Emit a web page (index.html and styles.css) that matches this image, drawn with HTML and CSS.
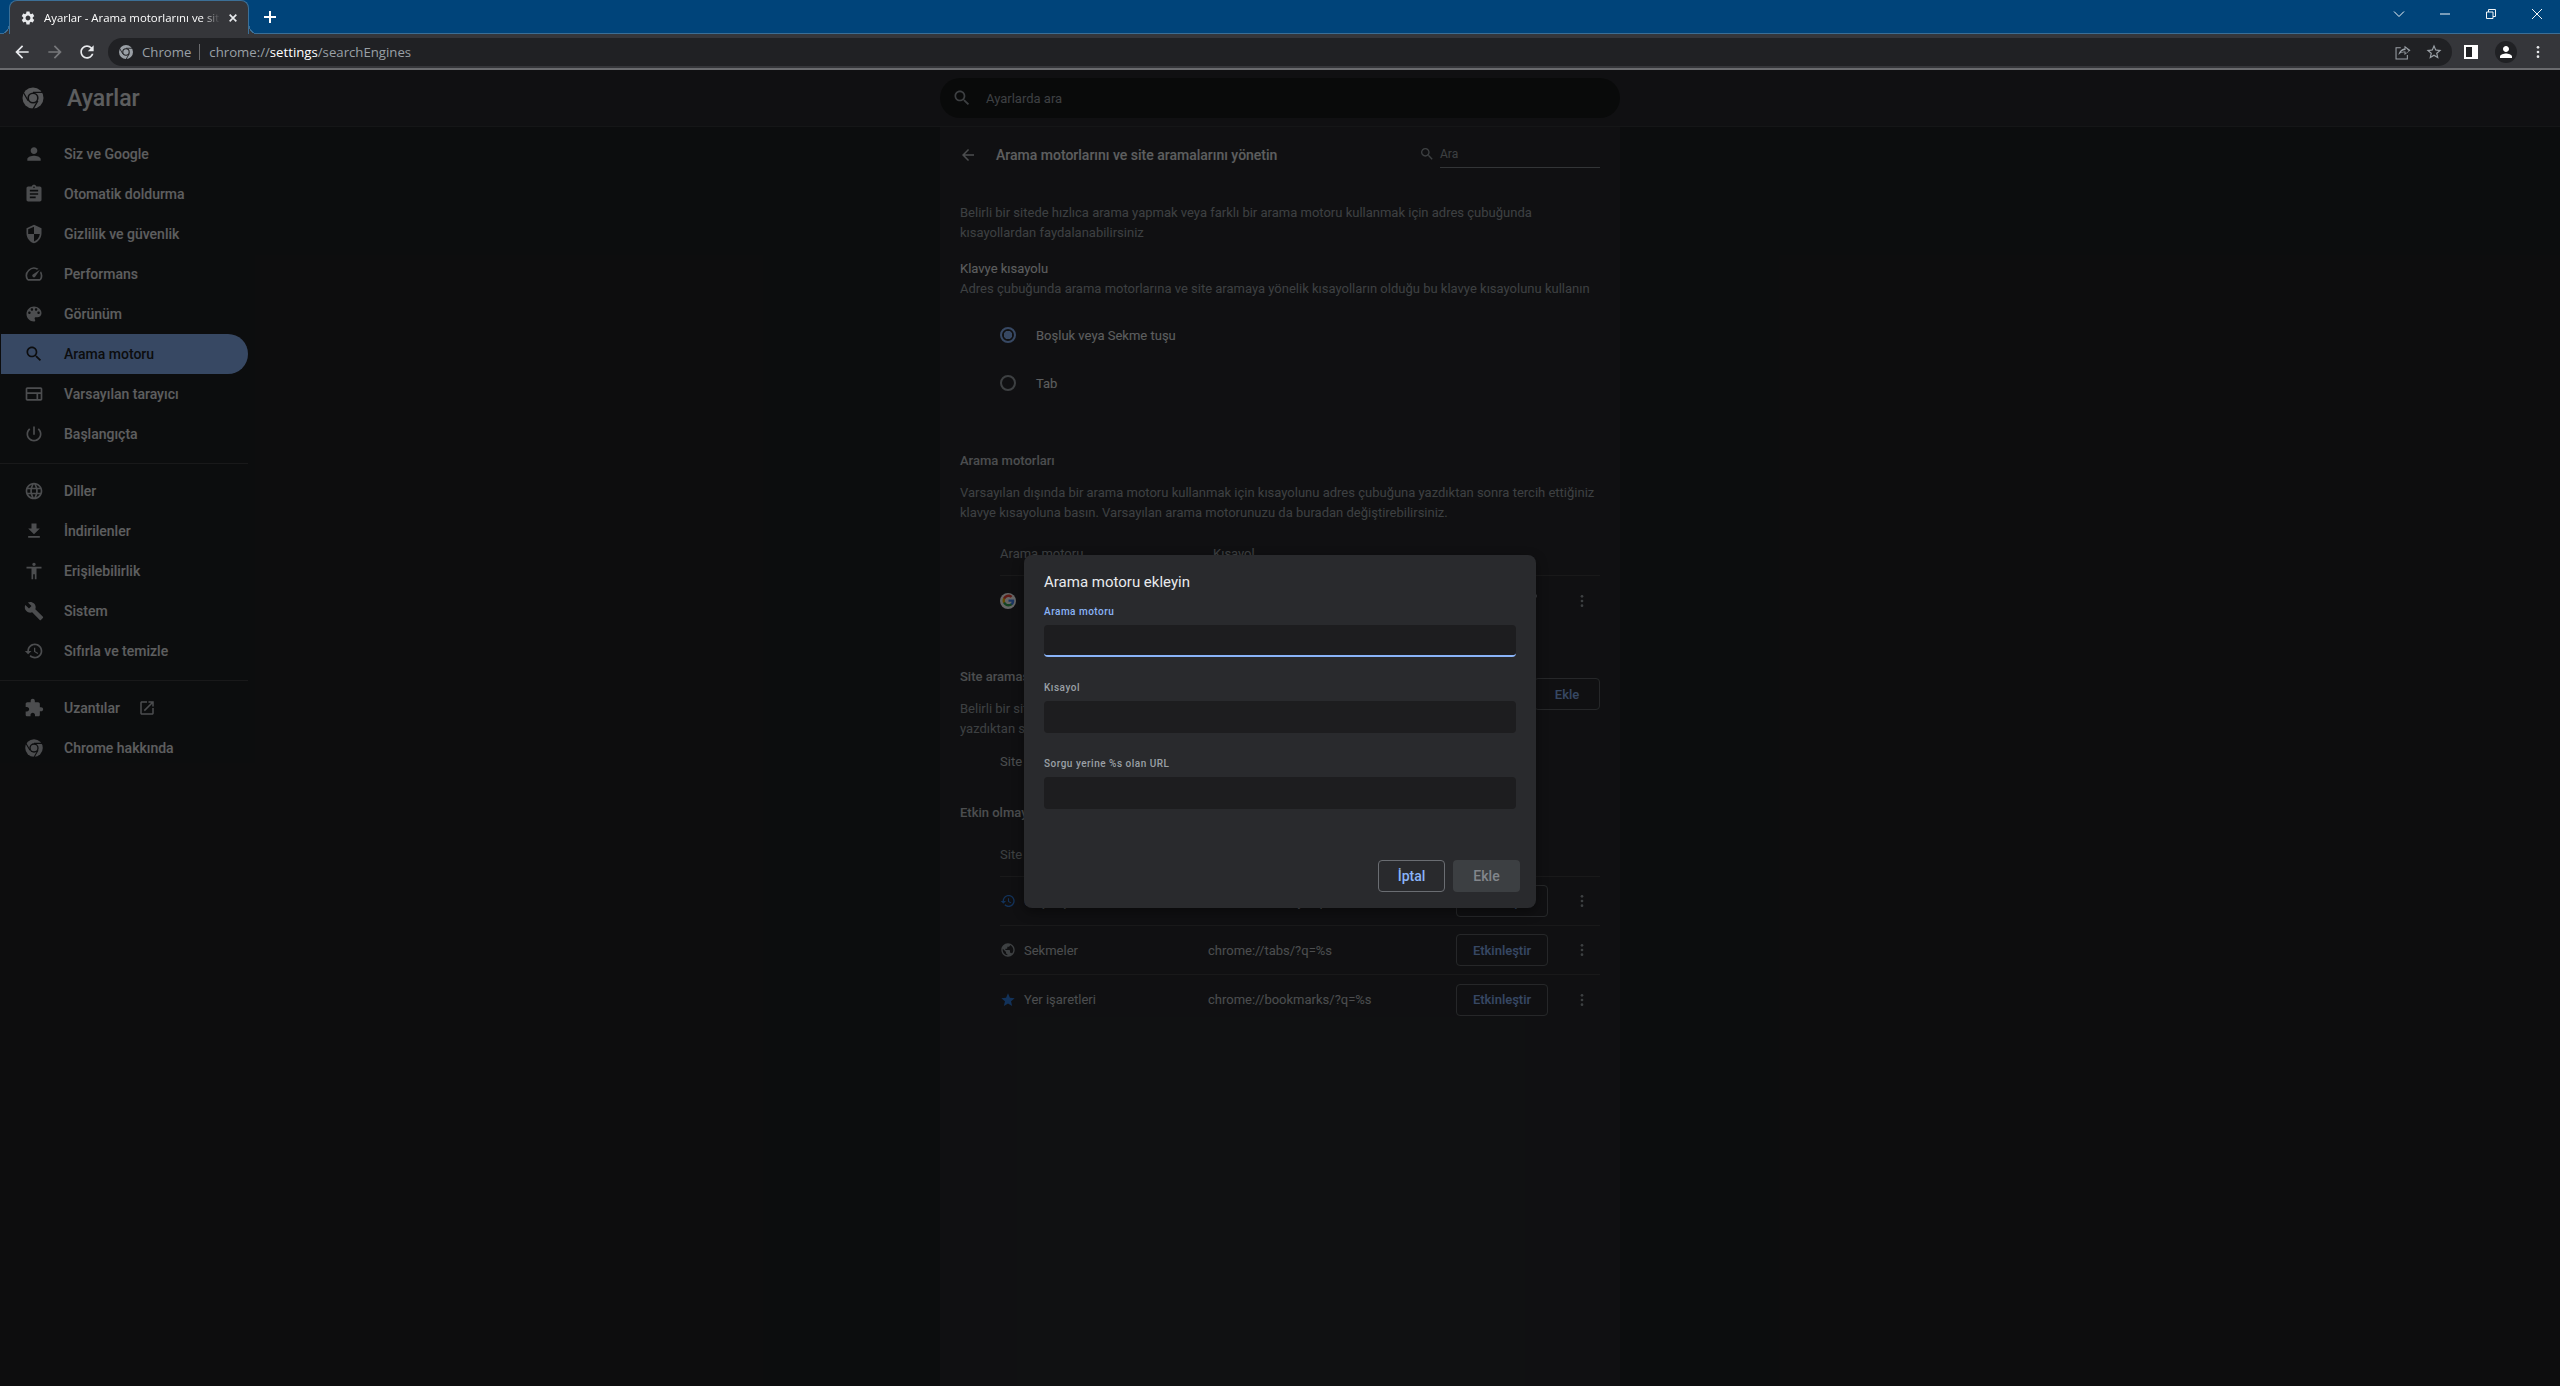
FILE: index.html
```html
<!DOCTYPE html>
<html lang="tr">
<head>
    <meta charset="UTF-8">
    <meta name="viewport" content="width=device-width, initial-scale=1.0">
    <title>Ayarlar - Arama motorlarını ve site aramalarını yönetin</title>
    <link rel="stylesheet" href="styles.css">
</head>
<body>
    <svg class="sprite" xmlns="http://www.w3.org/2000/svg">
        <symbol id="i-person" viewBox="0 0 24 24"><path d="M12 12c2.21 0 4-1.79 4-4s-1.79-4-4-4-4 1.79-4 4 1.79 4 4 4zm0 2c-2.67 0-8 1.34-8 4v2h16v-2c0-2.66-5.33-4-8-4z"/></symbol>
        <symbol id="i-assignment" viewBox="0 0 24 24"><path d="M19 3h-4.18C14.4 1.84 13.3 1 12 1c-1.3 0-2.4.84-2.82 2H5c-1.1 0-2 .9-2 2v14c0 1.1.9 2 2 2h14c1.1 0 2-.9 2-2V5c0-1.1-.9-2-2-2zm-7 0c.55 0 1 .45 1 1s-.45 1-1 1-1-.45-1-1 .45-1 1-1zm2 14H7v-2h7v2zm3-4H7v-2h10v2zm0-4H7V7h10v2z"/></symbol>
        <symbol id="i-security" viewBox="0 0 24 24"><path d="M12 1L3 5v6c0 5.55 3.84 10.74 9 12 5.16-1.26 9-6.45 9-12V5l-9-4zm0 10.99h7c-.53 4.12-3.28 7.79-7 8.94V12H5V6.3l7-3.11v8.8z"/></symbol>
        <symbol id="i-speed" viewBox="0 0 24 24"><path d="M20.38 8.57l-1.23 1.85a8 8 0 0 1-.22 7.58H5.07A8 8 0 0 1 15.58 6.85l1.85-1.23A10 10 0 0 0 3.35 19a2 2 0 0 0 1.72 1h13.85a2 2 0 0 0 1.74-1 10 10 0 0 0-.27-10.44zm-9.79 6.84a2 2 0 0 0 2.83 0l5.66-8.49-8.49 5.66a2 2 0 0 0 0 2.83z"/></symbol>
        <symbol id="i-palette" viewBox="0 0 24 24"><path d="M12 3c-4.97 0-9 4.03-9 9s4.03 9 9 9c.83 0 1.5-.67 1.5-1.5 0-.39-.15-.74-.39-1.01-.23-.26-.38-.61-.38-.99 0-.83.67-1.5 1.5-1.5H16c2.76 0 5-2.24 5-5 0-4.42-4.03-8-9-8zm-5.5 9c-.83 0-1.5-.67-1.5-1.5S5.67 9 6.5 9 8 9.67 8 10.5 7.33 12 6.5 12zm3-4C8.67 8 8 7.33 8 6.5S8.67 5 9.5 5s1.5.67 1.5 1.5S10.33 8 9.5 8zm5 0c-.83 0-1.5-.67-1.5-1.5S13.67 5 14.5 5s1.5.67 1.5 1.5S15.33 8 14.5 8zm3 4c-.83 0-1.5-.67-1.5-1.5S16.67 9 17.5 9s1.5.67 1.5 1.5-.67 1.5-1.5 1.5z"/></symbol>
        <symbol id="i-search" viewBox="0 0 24 24"><path d="M15.5 14h-.79l-.28-.27C15.41 12.59 16 11.11 16 9.5 16 5.91 13.09 3 9.5 3S3 5.91 3 9.5 5.91 16 9.5 16c1.61 0 3.09-.59 4.23-1.57l.27.28v.79l5 4.99L20.49 19l-4.99-5zm-6 0C7.01 14 5 11.99 5 9.5S7.01 5 9.5 5 14 7.01 14 9.5 11.99 14 9.5 14z"/></symbol>
        <symbol id="i-browser" viewBox="0 0 24 24"><path d="M20 4H4c-1.1 0-2 .9-2 2v12c0 1.1.9 2 2 2h16c1.1 0 2-.9 2-2V6c0-1.1-.9-2-2-2zm0 14H4v-6h11v6h2v-6h3v6zm0-8H4V6h16v4z"/></symbol>
        <symbol id="i-power" viewBox="0 0 24 24"><path d="M13 3h-2v10h2V3zm4.83 2.17l-1.42 1.42C17.99 7.86 19 9.81 19 12c0 3.87-3.13 7-7 7s-7-3.13-7-7c0-2.19 1.01-4.14 2.58-5.42L6.17 5.17C4.23 6.82 3 9.26 3 12c0 4.97 4.03 9 9 9s9-4.03 9-9c0-2.74-1.23-5.18-3.17-6.83z"/></symbol>
        <symbol id="i-language" viewBox="0 0 24 24"><path d="M11.99 2C6.47 2 2 6.48 2 12s4.47 10 9.99 10C17.52 22 22 17.52 22 12S17.52 2 11.99 2zm6.93 6h-2.95c-.32-1.25-.78-2.45-1.38-3.56 1.84.63 3.37 1.91 4.33 3.56zM12 4.04c.83 1.2 1.48 2.53 1.91 3.96h-3.82c.43-1.43 1.08-2.76 1.91-3.96zM4.26 14C4.1 13.36 4 12.69 4 12s.1-1.36.26-2h3.38c-.08.66-.14 1.32-.14 2 0 .68.06 1.34.14 2H4.26zm.82 2h2.95c.32 1.25.78 2.45 1.38 3.56-1.84-.63-3.37-1.9-4.33-3.56zm2.95-8H5.08c.96-1.66 2.49-2.93 4.33-3.56C8.81 5.55 8.35 6.75 8.03 8zM12 19.96c-.83-1.2-1.48-2.53-1.91-3.96h3.82c-.43 1.43-1.08 2.76-1.91 3.96zM14.34 14H9.66c-.09-.66-.16-1.32-.16-2 0-.68.07-1.35.16-2h4.68c.09.65.16 1.32.16 2 0 .68-.07 1.34-.16 2zm.25 5.56c.6-1.11 1.06-2.31 1.38-3.56h2.95c-.96 1.65-2.49 2.93-4.33 3.56zM16.36 14c.08-.66.14-1.32.14-2 0-.68-.06-1.34-.14-2h3.38c.16.64.26 1.31.26 2s-.1 1.36-.26 2h-3.38z"/></symbol>
        <symbol id="i-download" viewBox="0 0 24 24"><path d="M19 9h-4V3H9v6H5l7 7 7-7zM5 18v2h14v-2H5z"/></symbol>
        <symbol id="i-accessibility" viewBox="0 0 24 24"><path d="M12 2c1.1 0 2 .9 2 2s-.9 2-2 2-2-.9-2-2 .9-2 2-2zm9 7h-6v13h-2v-6h-2v6H9V9H3V7h18v2z"/></symbol>
        <symbol id="i-build" viewBox="0 0 24 24"><path d="M22.7 19l-9.1-9.1c.9-2.3.4-5-1.5-6.9-2-2-5-2.4-7.4-1.3L9 6 6 9 1.6 4.7C.4 7.1.9 10.1 2.9 12.1c1.9 1.9 4.6 2.4 6.9 1.5l9.1 9.1c.4.4 1 .4 1.4 0l2.3-2.3c.5-.4.5-1.1.1-1.4z"/></symbol>
        <symbol id="i-history" viewBox="0 0 24 24"><path d="M13 3c-4.97 0-9 4.03-9 9H1l3.89 3.89.07.14L9 12H6c0-3.87 3.13-7 7-7s7 3.13 7 7-3.13 7-7 7c-1.93 0-3.68-.79-4.94-2.06l-1.42 1.42C8.27 19.99 10.51 21 13 21c4.97 0 9-4.03 9-9s-4.03-9-9-9zm-1 5v5l4.28 2.54.72-1.21-3.5-2.08V8H12z"/></symbol>
        <symbol id="i-extension" viewBox="0 0 24 24"><path d="M20.5 11H19V7c0-1.1-.9-2-2-2h-4V3.5C13 2.12 11.88 1 10.5 1S8 2.12 8 3.5V5H4c-1.1 0-1.99.9-1.99 2v3.8H3.5c1.49 0 2.7 1.21 2.7 2.7s-1.21 2.7-2.7 2.7H2V20c0 1.1.9 2 2 2h3.8v-1.5c0-1.49 1.21-2.7 2.7-2.7 1.49 0 2.7 1.21 2.7 2.7V22H17c1.1 0 2-.9 2-2v-4h1.5c1.38 0 2.5-1.12 2.5-2.5S21.88 11 20.5 11z"/></symbol>
        <symbol id="i-open" viewBox="0 0 24 24"><path d="M19 19H5V5h7V3H5c-1.11 0-2 .9-2 2v14c0 1.1.89 2 2 2h14c1.1 0 2-.9 2-2v-7h-2v7zM14 3v2h3.59l-9.83 9.83 1.41 1.41L19 6.41V10h2V3h-7z"/></symbol>
        <symbol id="i-back" viewBox="0 0 24 24"><path d="M20 11H7.83l5.59-5.59L12 4l-8 8 8 8 1.41-1.41L7.83 13H20v-2z"/></symbol>
        <symbol id="i-forward" viewBox="0 0 24 24"><path d="M4 11h12.17l-5.59-5.59L12 4l8 8-8 8-1.41-1.41L16.17 13H4v-2z"/></symbol>
        <symbol id="i-refresh" viewBox="0 0 24 24"><path d="M17.65 6.35C16.2 4.9 14.21 4 12 4c-4.42 0-7.99 3.58-7.99 8s3.57 8 7.99 8c3.73 0 6.84-2.55 7.73-6h-2.08c-.82 2.33-3.04 4-5.65 4-3.31 0-6-2.69-6-6s2.69-6 6-6c1.66 0 3.14.69 4.22 1.78L13 11h7V4l-2.35 2.35z"/></symbol>
        <symbol id="i-dots" viewBox="0 0 24 24"><circle cx="12" cy="5" r="2"/><circle cx="12" cy="12" r="2"/><circle cx="12" cy="19" r="2"/></symbol>
        <symbol id="i-star" viewBox="0 0 24 24"><path d="M12 17.27L18.18 21l-1.64-7.03L22 9.24l-7.19-.61L12 2 9.19 8.63 2 9.24l5.46 4.73L5.82 21z"/></symbol>
        <symbol id="i-star-line" viewBox="0 0 24 24"><path d="M22 9.24l-7.19-.62L12 2 9.19 8.63 2 9.24l5.46 4.73L5.82 21 12 17.27 18.18 21l-1.63-7.03L22 9.24zM12 15.4l-3.76 2.27 1-4.28-3.32-2.88 4.38-.38L12 6.1l1.71 4.04 4.38.38-3.32 2.88 1 4.28L12 15.4z"/></symbol>
        <symbol id="i-public" viewBox="0 0 24 24"><path d="M12 2C6.48 2 2 6.48 2 12s4.48 10 10 10 10-4.48 10-10S17.52 2 12 2zm-1 17.93c-3.95-.49-7-3.85-7-7.93 0-.62.08-1.21.21-1.79L9 15v1c0 1.1.9 2 2 2v1.93zm6.9-2.54c-.26-.81-1-1.39-1.9-1.39h-1v-3c0-.55-.45-1-1-1H8v-2h2c.55 0 1-.45 1-1V7h2c1.1 0 2-.9 2-2v-.41c2.93 1.19 5 4.06 5 7.41 0 2.08-.8 3.97-2.1 5.39z"/></symbol>
        <symbol id="i-gear" viewBox="0 0 24 24"><path d="M19.14 12.94c.04-.3.06-.61.06-.94 0-.32-.02-.64-.07-.94l2.03-1.58c.18-.14.23-.41.12-.61l-1.92-3.32c-.12-.22-.37-.29-.59-.22l-2.39.96c-.5-.38-1.03-.7-1.62-.94l-.36-2.54c-.04-.24-.24-.41-.48-.41h-3.84c-.24 0-.43.17-.47.41l-.36 2.54c-.59.24-1.13.57-1.62.94l-2.39-.96c-.22-.08-.47 0-.59.22L2.74 8.87c-.12.21-.08.47.12.61l2.03 1.58c-.05.3-.09.63-.09.94s.02.64.07.94l-2.03 1.58c-.18.14-.23.41-.12.61l1.92 3.32c.12.22.37.29.59.22l2.39-.96c.5.38 1.03.7 1.62.94l.36 2.54c.05.24.24.41.48.41h3.84c.24 0 .44-.17.47-.41l.36-2.54c.59-.24 1.13-.56 1.62-.94l2.39.96c.22.08.47 0 .59-.22l1.92-3.32c.12-.22.07-.47-.12-.61l-2.01-1.58zM12 15.6c-1.98 0-3.6-1.62-3.6-3.6s1.62-3.6 3.6-3.6 3.6 1.62 3.6 3.6-1.62 3.6-3.6 3.6z"/></symbol>
        <symbol id="i-chrome" viewBox="0 0 24 24">
            <circle cx="12" cy="12" r="10.5" fill="currentColor"/>
            <circle cx="12" cy="12" r="5.6" fill="var(--gap)"/>
            <circle cx="12" cy="12" r="4" fill="currentColor"/>
            <path d="M12 6.4h10M7.15 14.8L2.2 6.2M16.85 14.8l-5 8.6" fill="none" stroke="var(--gap)" stroke-width="1.3"/>
        </symbol>
        <symbol id="i-share" viewBox="0 0 24 24"><path d="M2 5.5h7v1.4H3.4v13.7h13.7V16h1.4v6H2z"/><path d="M14 3.5l8 6.2-8 6.2v-3.6c-3.3 0-6 .9-8 3.7.5-4.4 3.3-8 8-8.7zm1.4 2.9v2.9c-3 .2-5 1.3-6.3 3.1 1.7-.9 3.6-1.2 6.3-1.2v2.8l4.3-3.3z" fill-rule="evenodd"/></symbol>
        <symbol id="i-google" viewBox="0 0 24 24">
            <path fill="#4285F4" d="M22.56 12.25c0-.78-.07-1.53-.2-2.25H12v4.26h5.92c-.26 1.37-1.04 2.53-2.08 3.23v2.77h3.57c2.08-1.92 3.28-4.74 3.28-8.01z"/>
            <path fill="#34A853" d="M12 23c2.97 0 5.46-.98 7.28-2.66l-3.57-2.77c-.98.66-2.23 1.06-3.71 1.06-2.86 0-5.29-1.93-6.16-4.53H2.18v2.84C3.99 20.53 7.7 23 12 23z"/>
            <path fill="#FBBC05" d="M5.84 14.09c-.22-.66-.35-1.36-.35-2.09s.13-1.43.35-2.09V7.07H2.18C1.43 8.55 1 10.22 1 12s.43 3.45 1.18 4.93l2.85-2.22.81-.62z"/>
            <path fill="#EA4335" d="M12 5.38c1.62 0 3.06.56 4.21 1.64l3.15-3.15C17.45 2.09 14.97 1 12 1 7.7 1 3.99 3.47 2.18 7.07l3.66 2.84c.87-2.6 3.3-4.53 6.16-4.53z"/>
        </symbol>
    </svg>

    <div class="tabstrip">
        <div class="tab">
            <svg class="tab-icon"><use href="#i-gear"/></svg>
            <span class="tab-title">Ayarlar - Arama motorlarını ve sit</span>
            <svg class="tab-close" viewBox="0 0 12 12"><path d="M2 2l8 8M10 2l-8 8"/></svg>
        </div>
        <svg class="new-tab" viewBox="0 0 12 12"><path d="M6 0v12M0 6h12"/></svg>
        <div class="window-controls">
            <svg class="win-btn" viewBox="0 0 12 12"><path d="M1 3.5l5 5 5-5"/></svg>
            <svg class="win-btn" viewBox="0 0 12 12"><path d="M1 6h10"/></svg>
            <svg class="win-btn" viewBox="0 0 12 12"><path d="M1.5 4H8v6.5H1.5zM3.5 4V1.5h7v7H8"/></svg>
            <svg class="win-btn" viewBox="0 0 12 12"><path d="M1 1l10 10M11 1L1 11"/></svg>
        </div>
    </div>

    <div class="toolbar">
        <svg class="tool-icon"><use href="#i-back"/></svg>
        <svg class="tool-icon tool-off"><use href="#i-forward"/></svg>
        <svg class="tool-icon"><use href="#i-refresh"/></svg>
        <div class="omnibox">
            <svg class="omni-logo"><use href="#i-chrome"/></svg>
            <span class="omni-chip">Chrome</span>
            <span class="omni-url">chrome://<b>settings</b>/searchEngines</span>
            <svg class="omni-action omni-share"><use href="#i-share"/></svg>
            <svg class="omni-action"><use href="#i-star-line"/></svg>
        </div>
        <div class="side-panel-btn"></div>
        <div class="avatar"><svg><use href="#i-person"/></svg></div>
        <svg class="tool-dots"><use href="#i-dots"/></svg>
    </div>

    <div class="page">
        <header class="page-header">
            <div class="brand">
                <svg class="brand-logo"><use href="#i-chrome"/></svg>
                <h1>Ayarlar</h1>
            </div>
            <div class="main-search">
                <svg><use href="#i-search"/></svg>
                <span>Ayarlarda ara</span>
            </div>
        </header>

        <div class="page-body">
            <nav class="sidebar">
                <a class="nav-item"><svg><use href="#i-person"/></svg>Siz ve Google</a>
                <a class="nav-item"><svg><use href="#i-assignment"/></svg>Otomatik doldurma</a>
                <a class="nav-item"><svg><use href="#i-security"/></svg>Gizlilik ve güvenlik</a>
                <a class="nav-item"><svg><use href="#i-speed"/></svg>Performans</a>
                <a class="nav-item"><svg><use href="#i-palette"/></svg>Görünüm</a>
                <a class="nav-item active"><svg><use href="#i-search"/></svg>Arama motoru</a>
                <a class="nav-item"><svg><use href="#i-browser"/></svg>Varsayılan tarayıcı</a>
                <a class="nav-item"><svg><use href="#i-power"/></svg>Başlangıçta</a>
                <div class="nav-sep"></div>
                <a class="nav-item"><svg><use href="#i-language"/></svg>Diller</a>
                <a class="nav-item"><svg><use href="#i-download"/></svg>İndirilenler</a>
                <a class="nav-item"><svg><use href="#i-accessibility"/></svg>Erişilebilirlik</a>
                <a class="nav-item"><svg><use href="#i-build"/></svg>Sistem</a>
                <a class="nav-item"><svg><use href="#i-history"/></svg>Sıfırla ve temizle</a>
                <div class="nav-sep"></div>
                <a class="nav-item"><svg><use href="#i-extension"/></svg>Uzantılar<svg class="nav-open"><use href="#i-open"/></svg></a>
                <a class="nav-item"><svg class="nav-chrome"><use href="#i-chrome"/></svg>Chrome hakkında</a>
            </nav>

            <main class="content">
                <div class="subpage-head">
                    <svg class="subpage-back"><use href="#i-back"/></svg>
                    <h2>Arama motorlarını ve site aramalarını yönetin</h2>
                    <div class="subpage-search">
                        <svg><use href="#i-search"/></svg>
                        <span>Ara</span>
                    </div>
                </div>

                <p class="text intro">Belirli bir sitede hızlıca arama yapmak veya farklı bir arama motoru kullanmak için adres çubuğunda<br>kısayollardan faydalanabilirsiniz</p>

                <div class="keyboard">
                    <div class="strong">Klavye kısayolu</div>
                    <p class="text">Adres çubuğunda arama motorlarına ve site aramaya yönelik kısayolların olduğu bu klavye kısayolunu kullanın</p>
                </div>

                <div class="radios">
                    <div class="radio-row"><span class="radio checked"></span>Boşluk veya Sekme tuşu</div>
                    <div class="radio-row"><span class="radio"></span>Tab</div>
                </div>

                <h3 class="section-title engines-title">Arama motorları</h3>
                <p class="text section-text">Varsayılan dışında bir arama motoru kullanmak için kısayolunu adres çubuğuna yazdıktan sonra tercih ettiğiniz<br>klavye kısayoluna basın. Varsayılan arama motorunuzu da buradan değiştirebilirsiniz.</p>

                <div class="table">
                    <div class="table-head"><span>Arama motoru</span><span>Kısayol</span></div>
                    <div class="table-row">
                        <span class="g-badge"><svg><use href="#i-google"/></svg></span>
                        <span>Google (Varsayılan)</span>
                        <span>google.com</span>
                        <span class="row-mark"></span>
                        <svg class="row-dots"><use href="#i-dots"/></svg>
                    </div>
                </div>

                <div class="site-head">
                    <div>
                        <h3 class="section-title">Site araması</h3>
                        <p class="text section-text">Belirli bir sitede veya Chrome'da arama yapmak için kısayolunu adres çubuğuna<br>yazdıktan sonra tercih ettiğiniz klavye kısayoluna basın.</p>
                    </div>
                    <button class="btn add-btn">Ekle</button>
                </div>
                <div class="empty-row">Site araması eklenmedi</div>

                <h3 class="section-title inactive-title">Etkin olmayan kısayollar</h3>
                <div class="table">
                    <div class="table-head"><span>Site veya sayfa</span><span>Kısayol</span></div>
                    <div class="table-row">
                        <svg class="row-icon blue"><use href="#i-history"/></svg>
                        <span>Geçmiş</span>
                        <span>chrome://history/?q=%s</span>
                        <button class="btn">Etkinleştir</button>
                        <svg class="row-dots"><use href="#i-dots"/></svg>
                    </div>
                    <div class="table-row">
                        <svg class="row-icon"><use href="#i-public"/></svg>
                        <span>Sekmeler</span>
                        <span>chrome://tabs/?q=%s</span>
                        <button class="btn">Etkinleştir</button>
                        <svg class="row-dots"><use href="#i-dots"/></svg>
                    </div>
                    <div class="table-row">
                        <svg class="row-icon blue"><use href="#i-star"/></svg>
                        <span>Yer işaretleri</span>
                        <span>chrome://bookmarks/?q=%s</span>
                        <button class="btn">Etkinleştir</button>
                        <svg class="row-dots"><use href="#i-dots"/></svg>
                    </div>
                </div>
            </main>
        </div>

        <div class="overlay">
            <div class="dialog">
                <h2 class="dialog-title">Arama motoru ekleyin</h2>
                <div class="field focused">
                    <label>Arama motoru</label>
                    <div class="input"></div>
                </div>
                <div class="field">
                    <label>Kısayol</label>
                    <div class="input"></div>
                </div>
                <div class="field">
                    <label>Sorgu yerine %s olan URL</label>
                    <div class="input"></div>
                </div>
                <div class="dialog-buttons">
                    <button class="dialog-btn cancel">İptal</button>
                    <button class="dialog-btn confirm">Ekle</button>
                </div>
            </div>
        </div>
    </div>
</body>
</html>
```

FILE: styles.css
```css
* {
    box-sizing: border-box;
}

html, body {
    height: 100%;
}

body {
    margin: 0;
    display: flex;
    flex-direction: column;
    overflow: hidden;
    font-family: Roboto, "Liberation Sans", sans-serif;
    font-size: 13px;
    background: #202124;
    color: #e8eaed;
}

h1, h2, h3, p {
    margin: 0;
}

.sprite {
    display: none;
}

/* tab strip */
.tabstrip {
    flex: none;
    height: 34px;
    display: flex;
    align-items: flex-start;
    background: #00447a;
    border-bottom: 1px solid #3c6f96;
}

.tab {
    position: relative;
    width: 240px;
    height: 34px;
    margin: 0 0 0 9px;
    padding: 0 10px;
    display: flex;
    align-items: center;
    background: #35363a;
    border: 1px solid #3c6f96;
    border-bottom: none;
    border-radius: 8px 8px 0 0;
    font-family: "Open Sans", sans-serif;
    font-size: 11.4px;
    color: #fff;
}

.tab::before,
.tab::after {
    content: "";
    position: absolute;
    bottom: 0;
    width: 8px;
    height: 8px;
}

.tab::before {
    left: -9px;
    background: radial-gradient(circle at 0 0, transparent 7px, #3c6f96 7px, #3c6f96 8px, #35363a 8px);
}

.tab::after {
    right: -9px;
    background: radial-gradient(circle at 100% 0, transparent 7px, #3c6f96 7px, #3c6f96 8px, #35363a 8px);
}

.tab-icon {
    flex: none;
    width: 16px;
    height: 16px;
    fill: #e8eaed;
    margin-right: 8px;
}

.tab-title {
    flex: 1;
    white-space: nowrap;
    overflow: hidden;
    -webkit-mask-image: linear-gradient(to right, #000 90%, transparent);
    mask-image: linear-gradient(to right, #000 90%, transparent);
}

.tab-close {
    flex: none;
    width: 10px;
    height: 10px;
    margin-left: 8px;
    stroke: #e8eaed;
    stroke-width: 2;
    fill: none;
}

.new-tab {
    flex: none;
    width: 12px;
    height: 12px;
    margin: 11px 0 0 15px;
    stroke: #fff;
    stroke-width: 2;
    fill: none;
}

.window-controls {
    margin-left: auto;
    margin-right: 17px;
    display: flex;
    gap: 34px;
    padding-top: 8px;
}

.win-btn {
    width: 12px;
    height: 12px;
    stroke: #f2f5f7;
    stroke-width: 1;
    fill: none;
}

/* toolbar */
.toolbar {
    flex: none;
    height: 36px;
    display: flex;
    align-items: center;
    padding: 1px 0 0 12px;
    background: #35363a;
    border-bottom: 2px solid #6a6b6e;
}

.tool-icon {
    flex: none;
    width: 20px;
    height: 20px;
    margin-right: 12.5px;
    fill: #e8eaed;
}

.tool-off {
    fill: #77787b;
}

.omnibox {
    flex: none;
    margin-left: -1.5px;
    width: 2344px;
    height: 28px;
    display: flex;
    align-items: center;
    padding-left: 10px;
    background: #202124;
    border-radius: 14px;
    color: #9aa0a6;
    font-family: "Open Sans", sans-serif;
    font-size: 13.2px;
}

.omni-logo {
    --gap: #202124;
    flex: none;
    width: 16px;
    height: 16px;
    color: #9aa0a6;
    margin-right: 8px;
}

.omni-chip {
    padding-right: 8px;
    margin-right: 9px;
    border-right: 1px solid #6a6b6e;
    line-height: 16px;
}

.omni-url b {
    font-weight: 400;
    color: #fff;
}

.omni-action {
    flex: none;
    width: 18px;
    height: 18px;
    fill: #9aa0a6;
    margin-right: 9px;
}

.omni-share {
    margin-left: auto;
    margin-right: 13px;
}

.side-panel-btn {
    flex: none;
    width: 14px;
    height: 14px;
    margin-left: 12px;
    background: #fff;
    border: 2px solid #fff;
    border-right-width: 6px;
    box-shadow: inset 0 0 0 7px #202124;
}

.avatar {
    flex: none;
    width: 22px;
    height: 22px;
    margin-left: 17px;
    display: flex;
    align-items: center;
    justify-content: center;
    background: #202124;
    border-radius: 50%;
}

.avatar svg {
    width: 18px;
    height: 18px;
    fill: #fff;
}

.tool-dots {
    flex: none;
    width: 16px;
    height: 16px;
    margin-left: 13px;
    fill: #e8eaed;
}

/* settings page */
.page {
    position: relative;
    flex: 1;
    min-height: 0;
    display: flex;
    flex-direction: column;
}

.page-header {
    flex: none;
    height: 57px;
    display: grid;
    grid-template-columns: 1fr 680px 1fr;
    align-items: center;
    background: #292a2d;
    border-bottom: 1px solid #36373a;
}

.brand {
    display: flex;
    align-items: center;
    padding-left: 21px;
}

.brand-logo {
    --gap: #292a2d;
    width: 24px;
    height: 24px;
    color: #dadce0;
    margin-right: 22px;
}

.brand h1 {
    font-size: 23px;
    font-weight: 500;
    color: #e8eaed;
}

.main-search {
    height: 40px;
    display: flex;
    align-items: center;
    padding-left: 12px;
    background: #18191b;
    border-radius: 20px;
    color: #9aa0a6;
    font-size: 13px;
}

.main-search svg {
    width: 20px;
    height: 20px;
    fill: #9aa0a6;
    margin-right: 14px;
}

.page-body {
    flex: 1;
    min-height: 0;
    display: grid;
    grid-template-columns: 1fr 680px 1fr;
}

.sidebar {
    padding: 7px 0 0 1px;
    width: 248px;
}

.nav-item {
    height: 40px;
    display: flex;
    align-items: center;
    padding-left: 23px;
    font-size: 14px;
    font-weight: 500;
    color: #e8eaed;
    border-radius: 0 20px 20px 0;
}

.nav-item > svg:first-child {
    flex: none;
    width: 20px;
    height: 20px;
    fill: #bdc1c6;
    margin-right: 20px;
}

.nav-item .nav-chrome {
    --gap: #202124;
    color: #bdc1c6;
}

.nav-item .nav-open {
    width: 18px;
    height: 18px;
    fill: #bdc1c6;
    margin-left: 18px;
}

.nav-item.active {
    background: #8ab4f8;
    color: #202124;
}

.nav-item.active svg {
    fill: #202124;
}

.nav-sep {
    height: 1px;
    margin: 9px 0 7px -1px;
    background: #3f4043;
}

.content {
    grid-column: 2;
    padding: 0 20px;
    background: #292a2d;
}

.subpage-head {
    height: 56px;
    display: flex;
    align-items: center;
}

.subpage-back {
    width: 18px;
    height: 18px;
    margin-left: -1px;
    margin-right: 19px;
    fill: #bdc1c6;
}

.subpage-head h2 {
    font-size: 14px;
    font-weight: 500;
    color: #e8eaed;
}

.subpage-search {
    margin-left: auto;
    margin-top: -6px;
    width: 181px;
    height: 32px;
    display: flex;
    align-items: flex-start;
    color: #9aa0a6;
    font-size: 12px;
}

.subpage-search svg {
    flex: none;
    width: 16px;
    height: 16px;
    fill: #9aa0a6;
    margin: 10px 5px 0 0;
}

.subpage-search span {
    flex: 1;
    height: 32px;
    padding-top: 4px;
    line-height: 28px;
    border-bottom: 1px solid #80868b;
}

.text {
    line-height: 20px;
    color: #9aa0a6;
}

.intro {
    margin-top: 20px;
}

.keyboard {
    margin-top: 16px;
    line-height: 20px;
}

.strong {
    color: #e8eaed;
}

.radios {
    margin-top: 12px;
}

.radio-row {
    height: 48px;
    display: flex;
    align-items: center;
    padding-left: 40px;
    color: #e8eaed;
}

.radio {
    flex: none;
    width: 16px;
    height: 16px;
    margin-right: 20px;
    border: 2px solid #9aa0a6;
    border-radius: 50%;
}

.radio.checked {
    border-color: #8ab4f8;
    background: radial-gradient(circle, #8ab4f8 4px, transparent 4.5px);
}

.section-title {
    font-size: 13px;
    font-weight: 500;
    line-height: 20px;
    color: #bdc1c6;
}

.engines-title {
    margin-top: 44px;
}

.section-text {
    margin-top: 12px;
}

.table {
    margin: 10px 0 0 40px;
}

.table-head {
    height: 43px;
    display: flex;
    align-items: center;
    padding-bottom: 1px;
    color: #9aa0a6;
    border-bottom: 1px solid #3f4043;
}

.table-head span:first-child {
    width: 213px;
}

.table-row {
    height: 49px;
    display: grid;
    grid-template-columns: 24px 184px 1fr 92px 52px;
    align-items: center;
    color: #bdc1c6;
    border-bottom: 1px solid #3f4043;
}

.table-row:last-child {
    border-bottom: none;
}

.g-badge {
    width: 16px;
    height: 16px;
    display: flex;
    align-items: center;
    justify-content: center;
    background: #fff;
    border-radius: 50%;
}

.g-badge svg {
    width: 13px;
    height: 13px;
}

.row-mark {
    width: 4px;
    height: 4px;
    margin: -10px 0 0 77px;
    background: #9aa0a6;
    border-radius: 50%;
}

.row-icon {
    width: 16px;
    height: 16px;
    fill: #9aa0a6;
}

.row-icon.blue {
    fill: #2f7de1;
}

.row-dots {
    justify-self: end;
    width: 16px;
    height: 16px;
    margin-right: 10px;
    fill: #9aa0a6;
}

.btn {
    width: 92px;
    height: 32px;
    padding: 0;
    background: transparent;
    border: 1px solid #5f6368;
    border-radius: 4px;
    font: 500 13px Roboto, sans-serif;
    color: #8ab4f8;
}

.site-head {
    margin-top: 42px;
    display: flex;
    justify-content: space-between;
    align-items: flex-start;
}

.add-btn {
    flex: none;
    width: 66px;
    margin-top: 11px;
}

.empty-row {
    margin-left: 40px;
    height: 46px;
    line-height: 46px;
    color: #bdc1c6;
}

.inactive-title {
    margin-top: 18px;
}

.inactive-title + .table {
    margin-top: 11px;
}

/* dialog */
.overlay {
    position: absolute;
    inset: 0;
    padding-top: 7px;
    display: flex;
    align-items: center;
    justify-content: center;
    background: rgba(0, 0, 0, 0.6);
}

.dialog {
    width: 512px;
    height: 353px;
    display: flex;
    flex-direction: column;
    padding: 0 16px 16px 20px;
    background: #292a2d;
    border-radius: 8px;
    box-shadow: 0 4px 12px rgba(0, 0, 0, 0.4);
}

.dialog-title {
    margin-top: 15px;
    font-size: 15px;
    font-weight: 400;
    line-height: 24px;
    color: #e8eaed;
}

.field {
    margin-top: 23px;
    margin-right: 4px;
}

.dialog-title + .field {
    margin-top: 10px;
}

.field label {
    display: block;
    height: 16px;
    font-size: 10px;
    font-weight: 500;
    letter-spacing: 0.5px;
    line-height: 16px;
    color: #9aa0a6;
}

.field.focused label {
    color: #8ab4f8;
}

.input {
    height: 32px;
    margin-top: 5px;
    background: #1d1d1f;
    border-radius: 4px;
}

.field.focused .input {
    border-bottom: 2px solid #8ab4f8;
}

.dialog-buttons {
    margin-top: auto;
    display: flex;
    justify-content: flex-end;
    gap: 8px;
}

.dialog-btn {
    width: 67px;
    height: 32px;
    padding: 0;
    border-radius: 4px;
    font: 500 14px Roboto, sans-serif;
}

.cancel {
    background: transparent;
    border: 1px solid #6a6d72;
    color: #8ab4f8;
}

.confirm {
    background: #3c3f42;
    border: none;
    color: #82868b;
}
```
